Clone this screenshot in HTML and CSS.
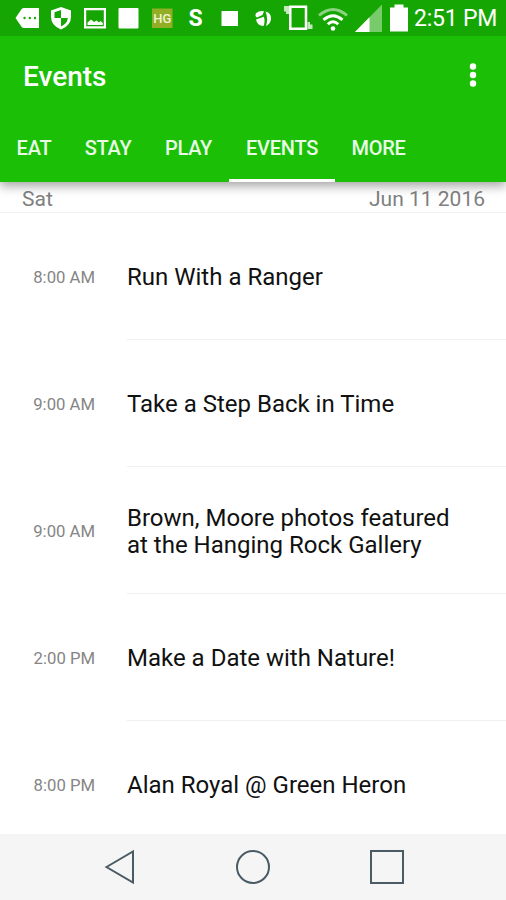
FILE: index.html
```html
<!DOCTYPE html>
<html lang="en">
<head>
<meta charset="utf-8">
<title>Events</title>
<link rel="stylesheet" href="styles.css">
</head>
<body>
<div class="screen">
  <header class="header">
    <div class="status">
      <svg width="45" height="36" viewBox="0 0 45 36"><path fill="#fff" d="M15.500 18 21.500 9.300Q22.500 8 24 8H39V28H24Q22.500 28 21.500 26.700Z"/><g fill="#16a603"><circle cx="24.500" cy="18" r="1.200"/><circle cx="29.800" cy="18" r="1.200"/><circle cx="35" cy="18" r="1.200"/></g></svg>
      <svg width="33" height="36" viewBox="45 0 33 36"><path fill="#fff" d="M61 7 71 10.500V17Q71 25.500 61 29.500 51 25.500 51 17V10.500Z"/><path fill="#16a603" d="M61 10V18H54.500V12.300ZM61 18H67.800Q67.500 23.500 61 26.500Z"/></svg>
      <svg width="36" height="36" viewBox="78 0 36 36"><path fill="none" stroke="#fff" stroke-width="2.200" d="M85.100 9.100H104.900V27.400H85.100Z"/><path fill="#fff" d="M87.500 25V22.500L91 19.500 94 22 96.500 20.500 99 22.500 100.500 21 102.800 23V25Z"/></svg>
      <svg width="32" height="36" viewBox="114 0 32 36"><rect x="118.500" y="8" width="20" height="20.500" rx="1" fill="#fff"/></svg>
      <svg width="32" height="36" viewBox="146 0 32 36"><rect x="152" y="8.500" width="20.500" height="19.500" fill="#91ae24"/><text class="badge" x="162.300" y="22.800" textLength="18">HG</text></svg>
      <svg width="34" height="36" viewBox="178 0 34 36"><text class="letter" x="195.700" y="26.300">S</text></svg>
      <svg width="34" height="36" viewBox="212 0 34 36"><rect x="221.500" y="11" width="16.500" height="15" rx=".6" fill="#fff"/></svg>
      <svg width="34" height="36" viewBox="246 0 34 36"><path fill="#fff" d="M256 13.200Q259.500 10.500 264 11.300L262.500 15 257 17.500Q254.500 16 256 13.200ZM265.500 11.500Q271.500 13 271 19 270.500 24 266 26 268.500 19 265.500 11.500ZM256 19.500 263.800 16.800Q265.500 21.500 263.500 26 257 25.500 256 19.500Z"/></svg>
      <svg width="36" height="36" viewBox="280 0 36 36"><path fill="none" stroke="#fff" stroke-width="2.500" d="M290.300 6.700H306V28.800H290.300Z"/><path fill="#fff" opacity=".75" d="M284 6H289V14H286V11.500H284ZM307.500 22H310V24.500H312.500V29H307.500Z"/></svg>
      <svg width="35" height="36" viewBox="316 0 35 36"><g fill="none" stroke="#fff" stroke-width="2.900"><path opacity=".5" d="M319 15.500Q333 3.500 347 15.500"/><path d="M323.500 19.800Q333 11.500 342.500 19.800M327.800 24.300Q333 19.300 338.200 24.300"/></g><circle cx="333" cy="28.500" r="2.300" fill="#fff"/></svg>
      <svg width="34" height="36" viewBox="351 0 34 36"><path fill="#77cb6b" d="M382 4.500V32H355Z"/><path fill="#fff" d="M369.500 17.300V32H355Z"/></svg>
      <svg width="27" height="36" viewBox="385 0 27 36"><path fill="#fff" d="M394.500 4.500H403.500V7.500H408V31.500H390V7.500H394.500Z"/></svg>
      <span class="clock">2:51 PM</span>
    </div>
    <div class="appbar">
      <h1 class="title">Events</h1>
      <svg class="more" width="12" height="28" viewBox="0 0 12 28"><g fill="#fff"><circle cx="6" cy="5.500" r="3.200"/><circle cx="6" cy="14" r="3.200"/><circle cx="6" cy="22.500" r="3.200"/></g></svg>
    </div>
    <nav class="tabs">
      <a class="tab eat">EAT</a>
      <a class="tab stay">STAY</a>
      <a class="tab play">PLAY</a>
      <a class="tab events active">EVENTS</a>
      <a class="tab other">MORE</a>
    </nav>
  </header>
  <div class="date"><span>Sat</span><span>Jun 11 2016</span></div>
  <main class="list">
    <div class="row"><span class="time">8:00 AM</span><span class="name">Run With a Ranger</span></div>
    <div class="row"><span class="time">9:00 AM</span><span class="name">Take a Step Back in Time</span></div>
    <div class="row"><span class="time">9:00 AM</span><span class="name">Brown, Moore photos featured<br>at the Hanging Rock Gallery</span></div>
    <div class="row"><span class="time">2:00 PM</span><span class="name">Make a Date with Nature!</span></div>
    <div class="row"><span class="time">8:00 PM</span><span class="name">Alan Royal @ Green Heron</span></div>
  </main>
  <footer class="nav">
    <svg width="40" height="40" viewBox="0 0 40 40"><path d="M7.500 20 34 4.500V35.500Z"/></svg>
    <svg width="40" height="40" viewBox="0 0 40 40"><circle cx="20" cy="20" r="16"/></svg>
    <svg width="40" height="40" viewBox="0 0 40 40"><path d="M4 4H36V36H4Z"/></svg>
  </footer>
</div>
</body>
</html>
```
FILE: styles.css
```css
* { box-sizing: border-box; }
body { margin: 0; background: #fff; font-family: Roboto, "Liberation Sans", sans-serif; }
.screen { width: 506px; height: 900px; display: flex; flex-direction: column; overflow: hidden; }
.header { position: relative; z-index: 1; flex: none; height: 182px; background: #1bbf06; color: #fff; box-shadow: 0 4px 10px rgba(0, 0, 0, .36); }
.status { display: flex; height: 36px; background: #16a603; }
.status svg { flex: none; display: block; }
.badge { font-size: 13px; font-weight: 500; fill: #eef3d8; text-anchor: middle; }
.letter { font-size: 23px; font-weight: 700; fill: #fff; text-anchor: middle; }
.clock { padding-left: 2px; font-size: 23px; letter-spacing: -.2px; line-height: 38px; white-space: nowrap; }
.appbar { display: flex; justify-content: space-between; height: 78px; padding: 25px 27px 0 23px; }
.title { margin: 0; font-size: 28px; line-height: 32px; font-weight: 500; }
.tabs { display: flex; height: 68px; font-size: 20px; letter-spacing: -.25px; line-height: 68px; font-weight: 500; }
.tab { flex: none; text-align: center; color: #e9fbe6; }
.eat { width: 68px; }
.stay { width: 80px; }
.play { width: 81px; }
.events { width: 106px; }
.other { width: 87px; }
.active { border-bottom: 3px solid #fff; }
.date { display: flex; flex: none; justify-content: space-between; height: 31px; padding: 0 21px 0 22px; border-bottom: 1px solid #f0f0f0; color: #808080; font-size: 21px; line-height: 34px; }
.list { flex: none; height: 620.5px; overflow: hidden; }
.row { display: flex; height: 127px; align-items: center; }
.time { width: 95px; flex: none; padding-top: 1px; text-align: right; color: #858585; font-size: 16.7px; }
.name { display: flex; flex: 1; align-items: center; height: 100%; margin-left: 32px; padding-top: 4px; border-bottom: 1px solid #f0f0f0; color: #111; font-size: 24px; line-height: 27.5px; white-space: nowrap; }
.nav { display: flex; flex: 1; align-items: center; justify-content: center; gap: 94px; background: #f5f5f5; }
.nav svg { flex: none; fill: none; stroke: #4b5b65; stroke-width: 2; }
```
